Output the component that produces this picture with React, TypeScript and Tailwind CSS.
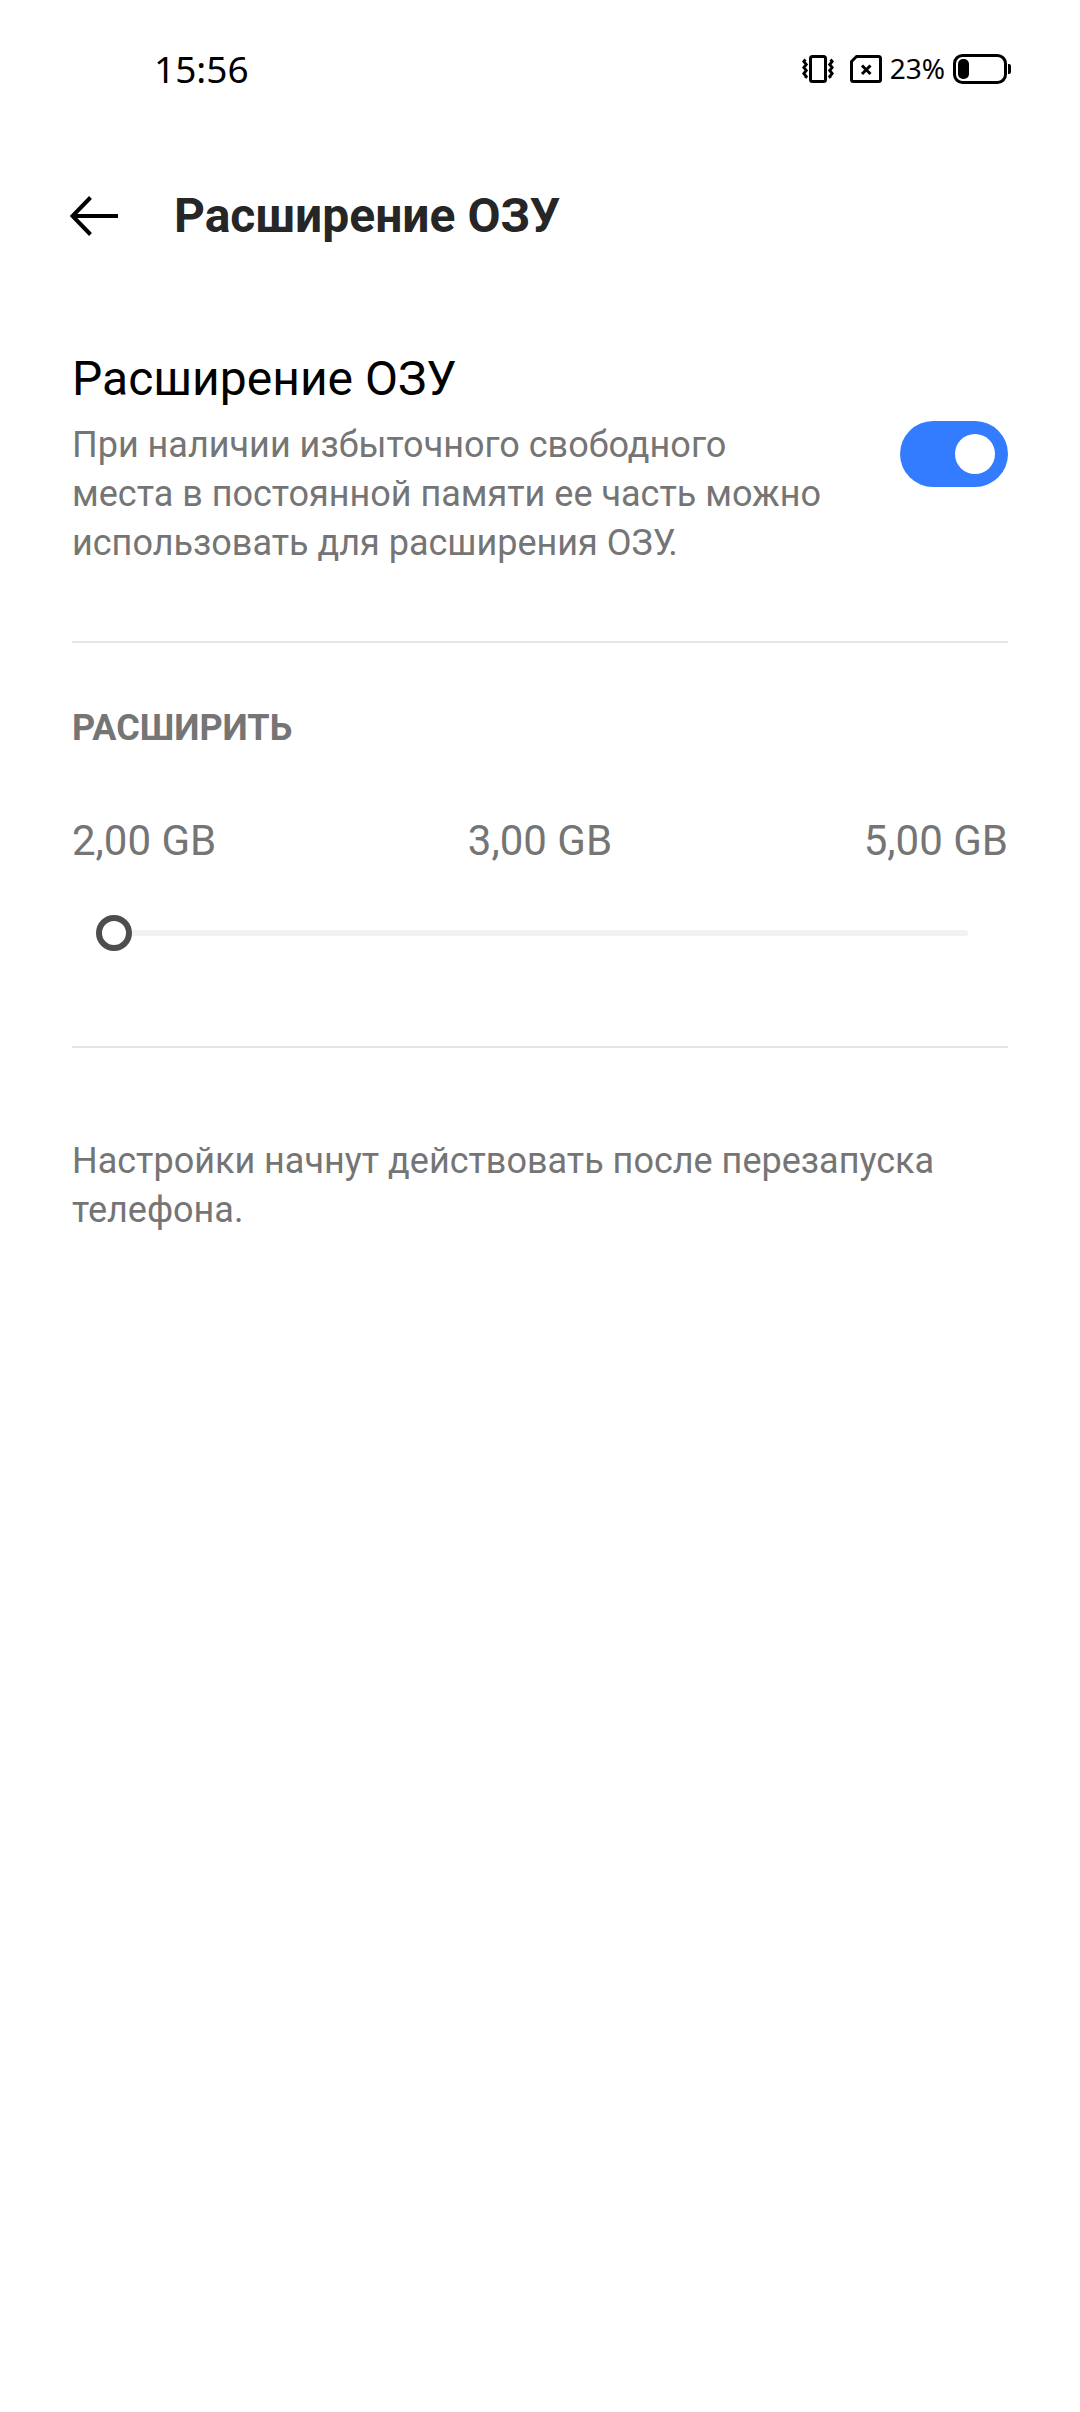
import { useState } from "react";

const GREY = "text-[#757575]";

const sizes = ["2,00 GB", "3,00 GB", "5,00 GB"];

const VibrateIcon = () => (
  <svg width="32" height="30" viewBox="0 0 32 30" fill="none" stroke="black" aria-hidden="true">
    <rect x="8.5" y="2.5" width="15" height="25" rx="2" strokeWidth="3" />
    <path d="M3.5 5.5L1.8 7.5l2.500 3-2.500 3 2.500 3-2.500 3 2.500 3-1 1.500" strokeWidth="2.8" />
    <path d="M28.5 5.5l1.700 2-2.500 3 2.500 3-2.500 3 2.500 3-2.500 3 1 1.500" strokeWidth="2.8" />
  </svg>
);

const NoSimIcon = () => (
  <svg width="32" height="30" viewBox="0 0 32 30" fill="none" stroke="black" aria-hidden="true">
    <path
      d="M6.5 2.5H28.5a2 2 0 0 1 2 2V25.5a2 2 0 0 1-2 2H3.5a2 2 0 0 1-2-2V7.5z"
      strokeWidth="3"
      strokeLinejoin="round"
    />
    <path d="M12 11.5l8.500 8.500M20.5 11.5l-8.500 8.500" strokeWidth="3" />
  </svg>
);

const BatteryIcon = () => (
  <svg width="58" height="30" viewBox="0 0 58 30" fill="none" aria-hidden="true">
    <rect x="1.5" y="1.5" width="51" height="27" rx="8" stroke="black" strokeWidth="3" />
    <rect x="5" y="5" width="11" height="20" rx="5" fill="black" />
    <path d="M55 10h1a2 2 0 0 1 2 2v6a2 2 0 0 1-2 2h-1z" fill="black" />
  </svg>
);

const StatusBar = () => (
  <div className="flex h-[138px] items-center pl-[154px] pr-[69px] font-['Noto_Sans',sans-serif] text-black">
    <span className="flex-1 text-[37px]">15:56</span>
    <div className="flex items-center">
      <VibrateIcon />
      <div className="ml-4 flex items-center gap-2">
        <NoSimIcon />
        <span className="pb-0.5 text-[28px]">23%</span>
        <BatteryIcon />
      </div>
    </div>
  </div>
);

const Header = () => (
  <header className="flex h-[155px] items-center gap-14 px-[70px]">
    <button type="button" aria-label="Назад">
      <svg width="48" height="40" viewBox="0 0 48 40" fill="none" stroke="black" strokeWidth="4" aria-hidden="true">
        <path d="M20.5 1.5L2.5 20l18 18.5M3 20h45" />
      </svg>
    </button>
    <h1 className="text-[48px] leading-[56px] font-bold text-[#262626]">Расширение ОЗУ</h1>
  </header>
);

const App = () => {
  const [enabled, setEnabled] = useState(true);
  const [size, setSize] = useState(0);

  return (
    <div className="min-h-screen bg-white font-[Roboto,sans-serif]">
      <StatusBar />
      <Header />
      <main className="px-[72px] pt-[46px]">
        <section className="flex items-center justify-between gap-[68px] border-b-2 border-[#e5e5e5] pb-[73px]">
          <div className="max-w-[760px]">
            <label htmlFor="ram" className="block text-[48px] leading-[80px] text-black">
              Расширение ОЗУ
            </label>
            <p id="ram-info" className={`mt-0.5 text-[36px] leading-[49px] ${GREY}`}>
              При наличии избыточного свободного места в постоянной памяти ее часть можно использовать
              для расширения ОЗУ.
            </p>
          </div>
          <input
            id="ram"
            type="checkbox"
            role="switch"
            aria-describedby="ram-info"
            checked={enabled}
            onChange={(e) => setEnabled(e.target.checked)}
            className="flex h-[66px] w-[108px] shrink-0 appearance-none items-center rounded-full bg-[#e5e5e5] px-[13px] before:size-10 before:rounded-full before:bg-white checked:justify-end checked:bg-[#337cff]"
          />
        </section>

        <section className="border-b-2 border-[#e5e5e5] pt-[61px] pb-[95px]">
          <h2 className={`text-[36px] leading-[49px] font-bold ${GREY}`}>РАСШИРИТЬ</h2>
          <div className={`mt-[63px] flex justify-between text-[42px] leading-[49px] ${GREY}`}>
            {sizes.map((item) => (
              <span key={item}>{item}</span>
            ))}
          </div>
          <div className="mt-[50px] grid items-center px-6">
            <div className="col-start-1 row-start-1 mx-4 h-1.5 rounded-full bg-[#f2f2f2]" />
            <input
              type="range"
              aria-label="Расширить"
              aria-valuetext={sizes[size]}
              min={0}
              max={sizes.length - 1}
              value={size}
              onChange={(e) => setSize(Number(e.target.value))}
              className="col-start-1 row-start-1 h-9 appearance-none bg-transparent [&::-webkit-slider-thumb]:size-9 [&::-webkit-slider-thumb]:appearance-none [&::-webkit-slider-thumb]:rounded-full [&::-webkit-slider-thumb]:border-6 [&::-webkit-slider-thumb]:border-[#4d4d4d] [&::-webkit-slider-thumb]:bg-white"
            />
          </div>
        </section>

        <p className={`pt-[89px] text-[36px] leading-[49px] ${GREY}`}>
          Настройки начнут действовать после перезапуска телефона.
        </p>
      </main>
    </div>
  );
};

export default App;
